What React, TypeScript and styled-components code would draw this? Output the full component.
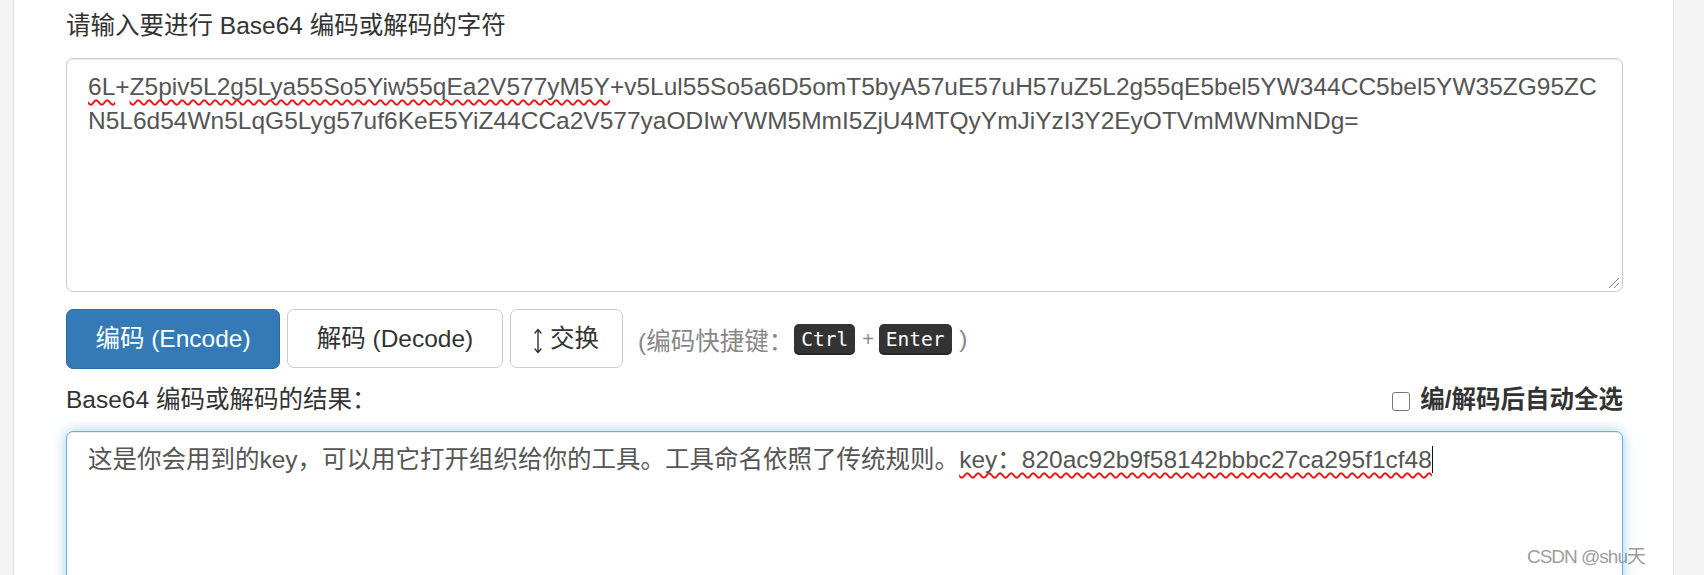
import React from "react";
import styled, { createGlobalStyle } from "styled-components";

const GlobalStyle = createGlobalStyle`
  * { box-sizing: border-box; }
  html, body {
    margin: 0;
    padding: 0;
    height: 575px;
    overflow: hidden;
    background: #f4f4f4;
  }
  body {
    font-family: "Liberation Sans", Arial, "Noto Sans CJK SC", sans-serif;
  }
`;

const Page = styled.div`
  display: flex;
  height: 575px;
  padding-left: 13px;
`;

const Panel = styled.main`
  position: relative;
  width: 1661px;
  height: 575px;
  overflow: hidden;
  background: #fff;
  border-left: 1px solid #e2e2e2;
  border-right: 1px solid #e2e2e2;
  padding: 9px 50px 0 52px;
  display: flex;
  flex-direction: column;
  font-size: 24.5px;
  color: #333;
`;

const Label = styled.div`
  line-height: 34px;
  height: 34px;
  color: #333;
  white-space: nowrap;
`;

const TextBox = styled.div<{ $height: number; $focus?: boolean }>`
  position: relative;
  flex: none;
  height: ${(p) => p.$height}px;
  margin-top: ${(p) => (p.$focus ? 14 : 15)}px;
  padding: 11px 21px;
  border: 1px solid ${(p) => (p.$focus ? "#66afe9" : "#ccc")};
  border-radius: 7px;
  background: #fff;
  color: #555;
  line-height: 34px;
  word-break: break-all;
  box-shadow: ${(p) =>
    p.$focus
      ? "inset 0 1px 1px rgba(0,0,0,.075), 0 0 14px rgba(102,175,233,.6)"
      : "inset 0 1px 1px rgba(0,0,0,.075)"};
`;

const Spell = styled.span`
  text-decoration: underline wavy #ee1111;
  text-decoration-thickness: 1.5px;
  text-underline-offset: 4px;
  text-decoration-skip-ink: none;
`;

const Caret = styled.span`
  display: inline-block;
  width: 1.5px;
  height: 27px;
  background: #111;
  vertical-align: -5px;
`;

const Grip = styled.svg`
  position: absolute;
  right: 2px;
  bottom: 2px;
`;

const ButtonRow = styled.div`
  display: flex;
  align-items: center;
  gap: 7px;
  margin-top: 17px;
  height: 60px;
`;

const Button = styled.button<{ $primary?: boolean; $width: number }>`
  width: ${(p) => p.$width}px;
  height: ${(p) => (p.$primary ? 60 : 59)}px;
  align-self: flex-start;
  padding: 0;
  border-radius: 7px;
  border: 1px solid ${(p) => (p.$primary ? "#2e6da4" : "#ccc")};
  background: ${(p) => (p.$primary ? "#337ab7" : "#fff")};
  color: ${(p) => (p.$primary ? "#fff" : "#333")};
  font-family: "Liberation Sans", Arial, "Noto Sans CJK SC", sans-serif;
  font-size: 24.5px;
  line-height: 34px;
  white-space: nowrap;
  display: flex;
  align-items: center;
  justify-content: center;
`;

const Arrow = styled.svg`
  margin-right: 8px;
  margin-top: 4px;
`;

const Hint = styled.span`
  margin-left: 8px;
  color: #888;
  font-size: 24.5px;
  white-space: nowrap;
  display: inline-flex;
  align-items: center;
`;

const Kbd = styled.kbd`
  display: inline-block;
  height: 31px;
  padding: 0 7px;
  margin: 0 1px 0 1px;
  border-radius: 5px;
  background: #333;
  color: #fff;
  font-family: "DejaVu Sans Mono", monospace;
  font-size: 19.5px;
  line-height: 31px;
  box-shadow: inset 0 -2px 0 rgba(0, 0, 0, 0.25);
`;

const Plus = styled.span`
  margin: 0 4px 0 6px;
  font-size: 20px;
`;

const ResultRow = styled.div`
  display: flex;
  align-items: center;
  justify-content: space-between;
  height: 34px;
  margin-top: 14px;
`;

const CheckLabel = styled.label`
  display: flex;
  align-items: center;
  gap: 10px;
  font-weight: bold;
  color: #333;
  line-height: 34px;
`;

const Check = styled.input`
  appearance: none;
  width: 18px;
  height: 19px;
  margin: 2px 0 0;
  border: 1.5px solid #767676;
  border-radius: 3px;
  background: #fff;
`;

const Watermark = styled.div`
  position: absolute;
  right: 28px;
  bottom: 7px;
  font-size: 19px;
  color: rgba(130, 130, 130, 0.8);
  letter-spacing: -1px;
  white-space: nowrap;
`;

export default function App() {
  return (
    <>
      <GlobalStyle />
      <Page>
        <Panel>
          <Label>请输入要进行 Base64 编码或解码的字符</Label>
          <TextBox $height={234}>
            <Spell>6L</Spell>+<Spell>Z5piv5L2g5Lya55So5Yiw55qEa2V577yM5Y</Spell>
            +v5Lul55So5a6D5omT5byA57uE57uH57uZ5L2g55qE5bel5YW344CC5bel5YW35ZG95ZCN5L6d54Wn5LqG5Lyg57uf6KeE5YiZ44CCa2V577yaODIwYWM5MmI5ZjU4MTQyYmJiYzI3Y2EyOTVmMWNmNDg=
            <Grip width="14" height="14" viewBox="0 0 14 14">
              <path d="M13 3 L3 13 M13 8 L8 13" stroke="#888" strokeWidth="1" fill="none" />
            </Grip>
          </TextBox>
          <ButtonRow>
            <Button $primary $width={214}>编码 (Encode)</Button>
            <Button $width={216}>解码 (Decode)</Button>
            <Button $width={113}>
              <Arrow width="8" height="26" viewBox="0 0 8 26">
                <path
                  d="M4 1.5 V24.5 M1 5 L4 1.5 L7 5 M1 21 L4 24.5 L7 21"
                  stroke="#333"
                  strokeWidth="1.4"
                  fill="none"
                  strokeLinecap="round"
                  strokeLinejoin="round"
                />
              </Arrow>
              交换
            </Button>
            <Hint>
              (编码快捷键：<Kbd>Ctrl</Kbd>
              <Plus>+</Plus>
              <Kbd>Enter</Kbd>&nbsp;)
            </Hint>
          </ButtonRow>
          <ResultRow>
            <Label>Base64 编码或解码的结果：</Label>
            <CheckLabel>
              <Check type="checkbox" />
              编/解码后自动全选
            </CheckLabel>
          </ResultRow>
          <TextBox $height={220} $focus>
            这是你会用到的key，可以用它打开组织给你的工具。工具命名依照了传统规则。
            <Spell>key：820ac92b9f58142bbbc27ca295f1cf48</Spell>
            <Caret />
          </TextBox>
          <Watermark>CSDN @shu天</Watermark>
        </Panel>
      </Page>
    </>
  );
}
